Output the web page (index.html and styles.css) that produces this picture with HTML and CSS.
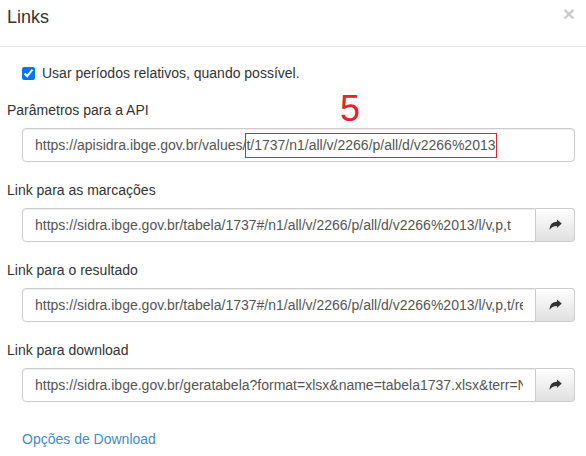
FILE: index.html
```html
<!DOCTYPE html>
<html lang="pt-BR">
<head>
<meta charset="utf-8">
<title>Links</title>
<link rel="stylesheet" href="styles.css">
</head>
<body>
<div class="modal">
  <div class="modal-header">
    <h4 class="modal-title">Links</h4>
    <span class="close">×</span>
  </div>
  <div class="modal-body">
    <label class="check-row"><input type="checkbox" class="check" checked><span>Usar períodos relativos, quando possível.</span></label>

    <div class="group">
      <div class="label">Parâmetros para a API</div>
      <div class="field"><div class="form-control">https://apisidra.ibge.gov.br/values/<span class="mark">t/1737/n1/all/v/2266/p/all/d/v2266%2013</span></div></div>
    </div>

    <div class="group">
      <div class="label">Link para as marcações</div>
      <div class="field input-group">
        <input class="form-control" readonly value="https://sidra.ibge.gov.br/tabela/1737#/n1/all/v/2266/p/all/d/v2266%2013/l/v,p,t">
        <span class="btn"><svg class="share" width="13" height="12" viewBox="0 0 16 15"><path d="M15.8 5.6 L9.8 0.6 V3.4 C4.2 3.6 0.6 6.8 0.6 13.8 C2.6 10 5.6 8.6 9.8 8.6 V11.4 Z" fill="#333"/></svg></span>
      </div>
    </div>

    <div class="group">
      <div class="label">Link para o resultado</div>
      <div class="field input-group">
        <input class="form-control" readonly value="https://sidra.ibge.gov.br/tabela/1737#/n1/all/v/2266/p/all/d/v2266%2013/l/v,p,t/resultado">
        <span class="btn"><svg class="share" width="13" height="12" viewBox="0 0 16 15"><path d="M15.8 5.6 L9.8 0.6 V3.4 C4.2 3.6 0.6 6.8 0.6 13.8 C2.6 10 5.6 8.6 9.8 8.6 V11.4 Z" fill="#333"/></svg></span>
      </div>
    </div>

    <div class="group">
      <div class="label">Link para download</div>
      <div class="field input-group">
        <input class="form-control" readonly value="https://sidra.ibge.gov.br/geratabela?format=xlsx&amp;name=tabela1737.xlsx&amp;terr=N&amp;rank=-&amp;query=t/1737/n1/all/v/2266/p/all/d/v2266%2013/l/v,p,t">
        <span class="btn"><svg class="share" width="13" height="12" viewBox="0 0 16 15"><path d="M15.8 5.6 L9.8 0.6 V3.4 C4.2 3.6 0.6 6.8 0.6 13.8 C2.6 10 5.6 8.6 9.8 8.6 V11.4 Z" fill="#333"/></svg></span>
      </div>
    </div>

    <a class="download" href="#">Opções de Download</a>
  </div>
  <div class="annot">5</div>
</div>
</body>
</html>
```

FILE: styles.css
```css
* { box-sizing: border-box; }
html, body { margin: 0; padding: 0; background: #fff; }
body {
  font-family: "Liberation Sans", Arial, sans-serif;
  font-size: 14px;
  line-height: 20px;
  color: #333;
  width: 586px;
  height: 456px;
  overflow: hidden;
}
.modal { position: relative; }
.modal-header {
  display: flex;
  justify-content: space-between;
  align-items: flex-start;
  padding: 7px 11px 19px 7px;
  border-bottom: 1px solid #e5e5e5;
}
.modal-title {
  margin: 0;
  font-size: 18px;
  font-weight: normal;
  line-height: 20px;
}
.close {
  font-size: 21px;
  font-weight: bold;
  line-height: 20px;
  color: #000;
  opacity: 0.2;
  margin-top: -3px;
}
.modal-body {
  padding: 16px 11px 0 7px;
}
.check-row {
  display: flex;
  align-items: center;
  margin-left: 15px;
  height: 20px;
}
.check {
  width: 13px;
  height: 13px;
  margin: 0 7px 0 0;
  accent-color: #0075ff;
}
.group { margin-top: 17px; }
.group + .group { margin-top: 18px; }
.label { height: 20px; }
.field { margin: 8px 0 0 15px; }
.form-control {
  display: block;
  width: 100%;
  height: 34px;
  padding: 6px 12px;
  border: 1px solid #ccc;
  border-radius: 4px;
  box-shadow: inset 0 1px 1px rgba(0,0,0,.075);
  font-family: "Liberation Sans", Arial, sans-serif;
  font-size: 14px;
  line-height: 20px;
  color: #555;
  background: #fff;
  white-space: nowrap;
  overflow: hidden;
}
.mark {
  box-shadow: 0 0 0 1px #e3242b;
  padding: 3px 0 4px;
}
.input-group { display: flex; }
.input-group .form-control {
  flex: 1;
  min-width: 0;
  border-radius: 4px 0 0 4px;
  outline: none;
}
.btn {
  flex: 0 0 39px;
  height: 34px;
  display: flex;
  align-items: center;
  justify-content: center;
  border: 1px solid #ccc;
  border-left: none;
  border-radius: 0 4px 4px 0;
  background: linear-gradient(to bottom, #fff 0, #e0e0e0 100%);
}
.share { margin-top: -1px; }
.download {
  display: inline-block;
  margin: 27px 0 0 15px;
  color: #428bca;
  text-decoration: none;
}
.annot {
  position: absolute;
  left: 340px;
  top: 91px;
  font-size: 36px;
  line-height: 36px;
  color: #e3242b;
}
```
